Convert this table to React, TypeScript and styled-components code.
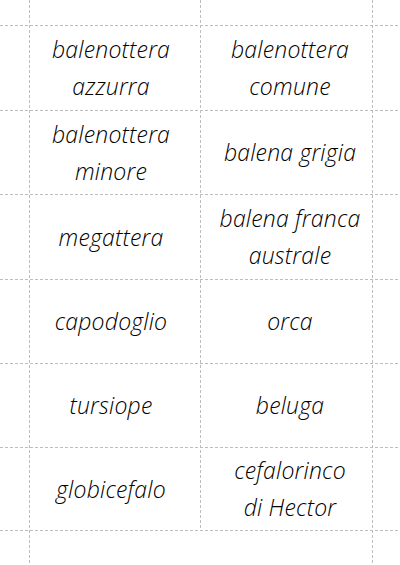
import React from 'react';
import styled, { createGlobalStyle } from 'styled-components';

const GlobalStyle = createGlobalStyle`
  html, body {
    margin: 0;
    padding: 0;
    background: #ffffff;
  }
`;

const GUIDE = '#bdbdbd';

const dashedY = (x: number) =>
  `linear-gradient(to bottom, ${GUIDE} 0 3px, transparent 3px 5px) ${x}px 0 / 1px 5px repeat-y`;

const Sheet = styled.div`
  width: 400px;
  height: 565px;
  overflow: hidden;
  background: ${dashedY(29)}, ${dashedY(372)}, #ffffff;
`;

const Board = styled.div`
  display: flex;
  flex-direction: column;
  height: 530px;
  background: ${dashedY(200)};
`;

const TopGap = styled.div`
  height: 25px;
  flex-shrink: 0;
`;

const CutLine = styled.div`
  height: 1px;
  flex-shrink: 0;
  background: linear-gradient(to right, ${GUIDE} 0 3px, transparent 3px 5px) 0 0 / 5px 1px repeat-x;
`;

const Row = styled.div<{ $h: number }>`
  display: grid;
  grid-template-columns: 29px 171px 172px;
  height: ${({ $h }) => $h}px;
  flex-shrink: 0;
`;

const Card = styled.div<{ $side: 'left' | 'right' }>`
  display: flex;
  align-items: center;
  justify-content: center;
  text-align: center;
  padding: ${({ $side }) => ($side === 'left' ? '0 7px 0 0' : '0 0 0 8px')};
  font-family: 'Open Sans', 'Noto Sans', sans-serif;
  font-style: italic;
  font-weight: 300;
  font-size: 23px;
  letter-spacing: 0.2px;
  line-height: 37px;
  color: #000000;
`;

const rows: { left: string[]; right: string[]; h: number }[] = [
  { left: ['balenottera', 'azzurra'], right: ['balenottera', 'comune'], h: 84 },
  { left: ['balenottera', 'minore'], right: ['balena grigia'], h: 83 },
  { left: ['megattera'], right: ['balena franca', 'australe'], h: 84 },
  { left: ['capodoglio'], right: ['orca'], h: 83 },
  { left: ['tursiope'], right: ['beluga'], h: 83 },
  { left: ['globicefalo'], right: ['cefalorinco', 'di Hector'], h: 82 },
];

const Lines: React.FC<{ text: string[] }> = ({ text }) => (
  <span>
    {text.map((t, i) => (
      <React.Fragment key={i}>
        {i > 0 && <br />}
        {t}
      </React.Fragment>
    ))}
  </span>
);

const App: React.FC = () => (
  <>
    <GlobalStyle />
    <Sheet>
      <Board>
        <TopGap />
        {rows.map((r, i) => (
          <React.Fragment key={i}>
            <CutLine />
            <Row $h={r.h}>
              <div />
              <Card $side="left">
                <Lines text={r.left} />
              </Card>
              <Card $side="right">
                <Lines text={r.right} />
              </Card>
            </Row>
          </React.Fragment>
        ))}
        <CutLine />
      </Board>
    </Sheet>
  </>
);

export default App;
